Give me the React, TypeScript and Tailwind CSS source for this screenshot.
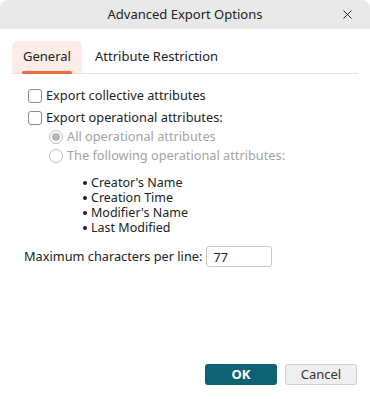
import { X } from 'lucide-react'

const font = { fontFamily: '"Noto Sans", "Open Sans", sans-serif' }

function Checkbox({ label }: { label: string }) {
  return (
    <label className="flex h-[19px] items-center gap-[4px] text-[12.75px] text-[#222]">
      <span className="h-[14px] w-[14px] rounded-[3px] border border-[#8a8a8a] bg-white" />
      {label}
    </label>
  )
}

function Radio({ label, checked }: { label: string; checked?: boolean }) {
  return (
    <label className="flex h-[19px] items-center gap-[4px] text-[12.75px] text-[#a3a3a3]">
      <span className="flex h-[14px] w-[14px] items-center justify-center rounded-full border border-[#bdbdbd] bg-white">
        {checked && <span className="h-[8px] w-[8px] rounded-full bg-[#b5b5b5]" />}
      </span>
      {label}
    </label>
  )
}

export default function App() {
  const attrs = ["Creator's Name", 'Creation Time', "Modifier's Name", 'Last Modified']

  return (
    <div className="flex h-[399px] w-[370px] flex-col overflow-hidden rounded-t-[8px] bg-white" style={font}>
      <div className="relative flex h-[29px] shrink-0 items-center justify-center bg-[#e9e9e9] text-[13px] text-[#222]">
        Advanced Export Options
        <X className="absolute right-[15px] top-[7px] h-[15px] w-[15px] text-[#222]" strokeWidth={1.5} />
      </div>

      <div className="px-[12px] pt-[12px]">
        <div className="flex items-end border-b border-[#e3e3e3] text-[13px] text-[#222]">
          <div className="relative flex h-[32px] w-[70px] items-center justify-center rounded-t-[6px] bg-[#fdece7]">
            General
            <span className="absolute bottom-[-1px] left-[10px] h-[3px] w-[50px] rounded-full bg-[#f0693f]" />
          </div>
          <div className="flex h-[32px] items-center pl-[13px]">Attribute Restriction</div>
        </div>
      </div>

      <div className="flex flex-col pl-[28px] pt-[12px]">
        <Checkbox label="Export collective attributes" />
        <div className="h-[3px]" />
        <Checkbox label="Export operational attributes:" />
        <div className="flex flex-col pl-[21px]">
          <Radio label="All operational attributes" checked />
          <Radio label="The following operational attributes:" />
        </div>
        <ul className="flex flex-col pl-[55px] pt-[10px] text-[12.5px] leading-[15px] text-[#222]">
          {attrs.map((a) => (
            <li key={a} className="flex h-[15px] items-center gap-[4px]">
              <span className="h-[4px] w-[4px] rounded-full bg-[#222]" />
              {a}
            </li>
          ))}
        </ul>
      </div>

      <div className="flex items-center gap-[4px] pl-[24px] pt-[11px] text-[12.75px] text-[#222]">
        Maximum characters per line:
        <input
          readOnly
          value="77"
          className="h-[21px] w-[66px] rounded-[3px] border border-[#c8c8c8] px-[6px] text-[12.75px] text-[#222] outline-none"
          style={font}
        />
      </div>

      <div className="flex-1" />

      <div className="flex justify-end gap-[8px] pb-[14px] pr-[13px]">
        <button className="h-[21px] w-[72px] rounded-[3px] bg-[#0d6372] text-[13px] font-bold text-white">OK</button>
        <button className="h-[21px] w-[72px] rounded-[3px] border border-[#cfcfcf] bg-[#efefef] text-[13px] text-[#333]">
          Cancel
        </button>
      </div>
    </div>
  )
}
